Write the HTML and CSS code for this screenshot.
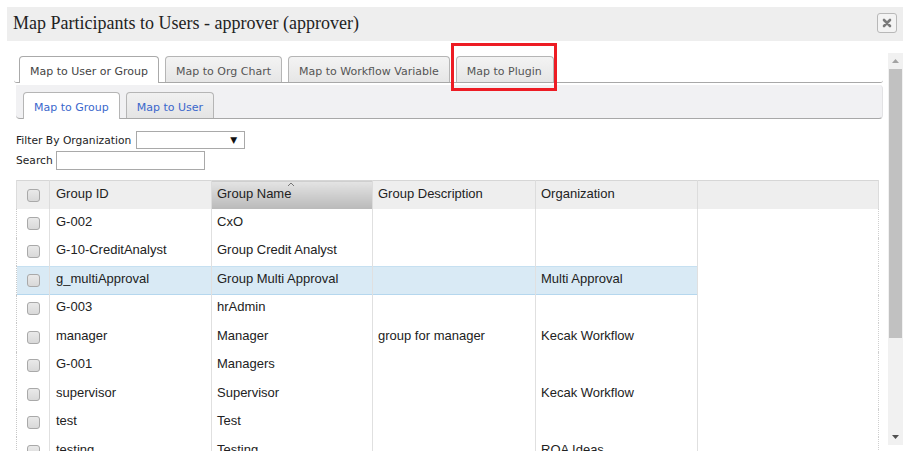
FILE: index.html
```html
<!DOCTYPE html>
<html>
<head>
<meta charset="utf-8">
<link rel="stylesheet" href="styles.css">
</head>
<body>
<div class="dialog">
  <div class="titlebar">
    <span class="title">Map Participants to Users - approver (approver)</span>
    <span class="close"><svg width="10" height="10" viewBox="0 0 10 10"><path d="M2 2 L8 8 M8 2 L2 8" stroke="#7a7a7a" stroke-width="2.6" stroke-linecap="round"/></svg></span>
  </div>
  <div class="body-wrap">
    <div class="content">
      <ul class="tabs">
        <li class="tab active">Map to User or Group</li>
        <li class="tab">Map to Org Chart</li>
        <li class="tab">Map to Workflow Variable</li>
        <li class="tab">Map to Plugin</li>
      </ul>
      <div class="subpanel">
        <ul class="subtabs">
          <li class="subtab active">Map to Group</li>
          <li class="subtab">Map to User</li>
        </ul>
      </div>
      <div class="filters">
        <div class="frow"><span>Filter By Organization</span><span class="select"><span class="arrow">&#9660;</span></span></div>
        <div class="frow"><span>Search</span><span class="input"></span></div>
      </div>
      <table class="grid">
        <colgroup>
          <col class="w-cb"><col class="w-id"><col class="w-name"><col class="w-desc"><col class="w-org"><col class="w-fill">
        </colgroup>
        <thead>
          <tr>
            <th class="c-cb"><span class="cb"></span></th>
            <th class="c-id">Group ID</th>
            <th class="c-name sorted">Group Name<svg class="caret" width="8" height="5" viewBox="0 0 8 5"><path d="M1 4 L4 1 L7 4" fill="none" stroke="#777" stroke-width="1"/></svg></th>
            <th class="c-desc">Group Description</th>
            <th class="c-org">Organization</th>
            <th class="c-fill"></th>
          </tr>
        </thead>
        <tbody>
          <tr><td class="c-cb"><span class="cb"></span></td><td>G-002</td><td>CxO</td><td class="dot"></td><td></td><td class="c-fill"></td></tr>
          <tr><td class="c-cb"><span class="cb"></span></td><td>G-10-CreditAnalyst</td><td>Group Credit Analyst</td><td class="dot"></td><td></td><td class="c-fill"></td></tr>
          <tr class="sel"><td class="c-cb"><span class="cb"></span></td><td>g_multiApproval</td><td>Group Multi Approval</td><td class="dot"></td><td>Multi Approval</td><td class="c-fill"></td></tr>
          <tr><td class="c-cb"><span class="cb"></span></td><td>G-003</td><td>hrAdmin</td><td class="dot"></td><td></td><td class="c-fill"></td></tr>
          <tr><td class="c-cb"><span class="cb"></span></td><td>manager</td><td>Manager</td><td class="dot">group for manager</td><td>Kecak Workflow</td><td class="c-fill"></td></tr>
          <tr><td class="c-cb"><span class="cb"></span></td><td>G-001</td><td>Managers</td><td class="dot"></td><td></td><td class="c-fill"></td></tr>
          <tr><td class="c-cb"><span class="cb"></span></td><td>supervisor</td><td>Supervisor</td><td class="dot"></td><td>Kecak Workflow</td><td class="c-fill"></td></tr>
          <tr><td class="c-cb"><span class="cb"></span></td><td>test</td><td>Test</td><td class="dot"></td><td></td><td class="c-fill"></td></tr>
          <tr><td class="c-cb"><span class="cb"></span></td><td>testing</td><td>Testing</td><td class="dot"></td><td>ROA Ideas</td><td class="c-fill"></td></tr>
        </tbody>
      </table>
    </div>
    <div class="scrollbar">
      <div class="sb-up"><svg width="7" height="4" viewBox="0 0 7 4"><path d="M0 4 L3.5 0 L7 4Z" fill="#a3a3a3"/></svg></div>
      <div class="sb-track"><div class="sb-thumb"></div></div>
      <div class="sb-down"><svg width="7" height="4" viewBox="0 0 7 4"><path d="M0 0 L3.5 4 L7 0Z" fill="#505050"/></svg></div>
    </div>
  </div>
</div>
<div class="callout"></div>
</body>
</html>
```

FILE: styles.css
```css
html, body {
  margin: 0;
  padding: 0;
  width: 909px;
  height: 451px;
  overflow: hidden;
  background: #fff;
}
body {
  position: relative;
  font-family: "DejaVu Sans", Verdana, sans-serif;
}
.dialog {
  margin: 7px 6px 0 7px;
}
.titlebar {
  height: 34px;
  background: #eeeeee;
  display: flex;
  align-items: center;
  justify-content: space-between;
  padding: 0 6px 0 6px;
}
.title {
  font-family: "Liberation Serif", "Times New Roman", serif;
  font-size: 18px;
  color: #222;
  padding-bottom: 2px;
}
.close {
  width: 18px;
  height: 18px;
  border: 1px solid #b8b8b8;
  border-radius: 3px;
  background: #f3f3f3;
  display: flex;
  align-items: center;
  justify-content: center;
  margin-top: -3px;
}
.body-wrap {
  display: flex;
  height: 410px;
}
.content {
  width: 869px;
  padding: 15px 5px 0 7px;
  flex: none;
}
.tabs {
  list-style: none;
  margin: 0;
  padding: 0 0 0 5px;
  display: flex;
  gap: 6px;
  border-bottom: 1px solid #a8a8a8;
  border-radius: 0 0 3px 3px;
}
.tab {
  height: 25px;
  line-height: 29px;
  padding: 0 10px;
  border: 1px solid #b5b5b5;
  border-bottom: none;
  border-radius: 4px 4px 0 0;
  background: linear-gradient(#f3f3f3, #e6e6e6);
  color: #555;
  font-size: 11px;
  margin-bottom: -1px;
}
.tab.active {
  background: #fff;
  color: #444;
  height: 26px;
  border-color: #aaa;
}
.tab:nth-child(4) {
  padding: 0 11px 0 10px;
}
.subpanel {
  margin: 2px 0 0 2px;
  background: #f1f1f3;
  padding: 7px 0 0 7px;
  border-bottom: 1px solid #a8a8a8;
  border-right: 1px solid #e2e2e4;
  border-radius: 0 4px 4px 4px;
}
.subtabs {
  list-style: none;
  margin: 0;
  padding: 0;
  display: flex;
  gap: 6px;
}
.subtab {
  height: 25px;
  line-height: 29px;
  padding: 0 10px;
  border: 1px solid #b5b5b5;
  border-bottom: none;
  border-radius: 4px 4px 0 0;
  background: linear-gradient(#f1f1f1, #e4e4e4);
  color: #3a67cc;
  font-size: 11px;
  margin-bottom: -1px;
}
.subtab.active {
  background: #fff;
  height: 26px;
}
.filters {
  margin: 12px 0 0 2px;
  font-size: 10.7px;
  color: #222;
}
.frow {
  display: flex;
  align-items: center;
  gap: 5px;
}
.frow + .frow {
  margin-top: 2px;
  gap: 3px;
}
.select {
  width: 107px;
  height: 16px;
  border: 1px solid #a9a9a9;
  background: #fff;
  display: flex;
  align-items: center;
  justify-content: flex-end;
}
.arrow {
  font-size: 9px;
  color: #111;
  margin-right: 7px;
}
.input {
  width: 147px;
  height: 17px;
  border: 1px solid #a9a9a9;
  background: #fff;
}
.grid {
  margin: 10px 0 0 2px;
  width: 862px;
  border-collapse: collapse;
  table-layout: fixed;
  font-family: "Liberation Sans", Arial, sans-serif;
  font-size: 13px;
  color: #222;
  border-top: 1px solid #d6d6d6;
}
.w-cb { width: 33px; }
.w-id { width: 162px; }
.w-name { width: 161px; }
.w-desc { width: 163px; }
.w-org { width: 162px; }
.w-fill { width: 181px; }
.grid th {
  height: 25px;
  background: #eeeeee;
  font-weight: normal;
  text-align: left;
  padding: 0 5px 3px 5px;
  border-left: 1px solid #dcdcdc;
  position: relative;
}
.grid th.c-fill {
  border-right: 1px solid #dcdcdc;
}
.grid th.sorted {
  background: linear-gradient(#e4e4e4, #b9b9b9);
}
.caret {
  position: absolute;
  left: 75px;
  top: 1px;
}
.grid td {
  height: 24.5px;
  padding: 0 5px 4px 5px;
  border-left: 1px solid #e0e0e0;
  white-space: nowrap;
  overflow: hidden;
}
.grid td.c-cb {
  border-left: 1px dotted #c8c8c8;
}
.grid td.dot {
  border-right: 1px dotted #cfcfcf;
}
.grid td.c-fill {
  border-right: 1px dotted #cfcfcf;
}
.grid td:nth-child(2), .grid th:nth-child(2) {
  padding-left: 6px;
}
.grid th.c-cb, .grid td.c-cb {
  text-align: center;
  padding: 0 0 2px 0;
}
.grid tr.sel td {
  background: #d9eaf5;
  box-shadow: inset 0 1px 0 #c6e0f1, inset 0 -1px 0 #b5d7ee;
}
.grid tr.sel td.c-fill {
  background: #fff;
  box-shadow: none;
}
.cb {
  display: inline-block;
  width: 11px;
  height: 11px;
  border: 1px solid #a9a9a9;
  border-radius: 3px;
  background: linear-gradient(#e9e9e9, #d9d9d9);
  vertical-align: middle;
}
.scrollbar {
  margin-top: 12px;
  width: 15px;
  height: 392px;
  background: #f1f1f1;
  display: flex;
  flex-direction: column;
  flex: none;
}
.sb-up, .sb-down {
  height: 16px;
  display: flex;
  align-items: center;
  justify-content: center;
}
.sb-track {
  flex: 1;
  padding: 0 1px;
}
.sb-thumb {
  height: 269px;
  background: #c1c1c1;
}
.callout {
  position: absolute;
  left: 451px;
  top: 43px;
  width: 100px;
  height: 42px;
  border: 3px solid #ed1c24;
}
```
